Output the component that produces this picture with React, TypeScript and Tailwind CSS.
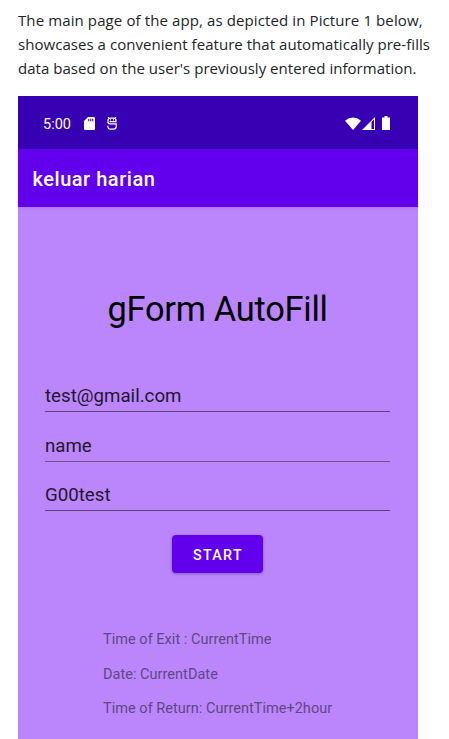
import React from "react";

const introLines = [
  { text: "The main page of the app, as depicted in Picture 1 below,", spacing: "tracking-[0.11px]" },
  { text: "showcases a convenient feature that automatically pre-fills", spacing: "tracking-[0.045px]" },
  { text: "data based on the user's previously entered information.", spacing: "tracking-[0.03px]" },
];

function StatusBar() {
  return (
    <div className="flex h-[53px] items-center bg-[#3700b3] pt-[2px] pr-[28px] pl-[25px] text-white">
      <span className="mt-[2px] w-[41px] text-[14.5px] leading-5">5:00</span>
      <svg className="mb-px h-[13px] w-[11px]" viewBox="0 0 11 13" fill="currentColor">
        <path fillRule="evenodd" d="M4 0H9.7Q11 0 11 1.3V11.7Q11 13 9.7 13H1.3Q0 13 0 11.7V4ZM4.2 1.7V4.2H5.3V1.7ZM6.2 1.7V4.2H7.3V1.7ZM8.2 1.7V4.2H9.3V1.7Z" />
      </svg>
      <svg className="mb-px ml-[12px] h-[13px] w-[10px]" viewBox="0 0 10 13" fill="none" stroke="currentColor" strokeWidth="1.2">
        <path d="M1.2 0L2 1.5M8.8 0L8 1.5M1 5.4V3.8Q1 1.1 3.5 1.1H6.5Q9 1.1 9 3.8V4.6H2.5" />
        <path d="M1 5Q1 6.9 3.2 6.9H9.2V9.5Q9.2 12.2 6.3 12.2H3.7Q.8 12.2 .8 8.8" />
        <path d="M3 2.9H4M6 2.9H7" />
      </svg>
      <div className="mb-px ml-auto flex items-center">
        <svg className="h-[13px] w-[16px]" viewBox="0 0 16 13" fill="currentColor">
          <path d="M0 3.8Q3.5 .6 8 .6T16 3.8L8 13Z" />
        </svg>
        <svg className="ml-[1px] h-[13px] w-[13px]" viewBox="0 0 13 13" fill="currentColor">
          <path fillRule="evenodd" d="M0 13L13 0V13ZM9.5 5V12H12V2.5Z" />
        </svg>
        <svg className="ml-[7px] h-[14px] w-[8px]" viewBox="0 0 8 14" fill="currentColor">
          <path d="M2.5 0H5.5V1.4H8V14H0V1.4H2.5Z" />
        </svg>
      </div>
    </div>
  );
}

function Field({ value, className }: { value: string; className: string }) {
  return (
    <div className={`border-b text-[18.7px] leading-6 text-[#22162f] ${className}`}>
      {value}
    </div>
  );
}

export default function App() {
  return (
    <main className="h-[739px] w-[449px] overflow-hidden bg-white pt-[8px] pl-[18px]">
      <div className="h-[88px] font-['Open_Sans',sans-serif] text-[15px] leading-6 whitespace-nowrap text-[#212529]">
        {introLines.map((line) => (
          <p key={line.text} className={line.spacing}>{line.text}</p>
        ))}
      </div>
      <section className="flex h-[643px] w-[400px] flex-col bg-[#bb86fc] font-[Roboto,sans-serif]">
        <StatusBar />
        <header className="flex h-[58px] shrink-0 items-center bg-[#6200ee] pt-px pl-[14.5px] text-[20px] font-medium tracking-[0.53px] text-white shadow-[0_1px_3px_rgba(0,0,0,0.1)]">
          keluar harian
        </header>
        <h1 className="mt-[81px] h-[42px] pl-[89.5px] text-[34.4px] leading-[42px] tracking-[-0.26px] whitespace-nowrap text-black">gForm AutoFill</h1>
        <div className="mr-[28px] ml-[27px] mt-[54px] flex flex-col">
          <Field value="test@gmail.com" className="h-[28px] border-[#5c4280]" />
          <Field value="name" className="mt-[22px] h-[28px] border-[#704f98]" />
          <Field value="G00test" className="mt-[21px] h-[28px] border-[#5c4280]" />
        </div>
        <button className="mt-[24px] ml-[154px] h-[38px] w-[91px] shrink-0 rounded-[4px] bg-[#6200ee] pt-[3px] pl-px text-[14.3px] font-medium tracking-[1.3px] text-white shadow-[0_1px_3px_rgba(0,0,0,0.3)]">
          START
        </button>
        <div className="mt-[50px] flex flex-col pl-[85px] text-[14.5px] leading-[34.5px] tracking-[0.03px] whitespace-nowrap text-[#604785]">
          <p>Time of Exit : CurrentTime</p>
          <p>Date: CurrentDate</p>
          <p>Time of Return: CurrentTime+2hour</p>
        </div>
      </section>
    </main>
  );
}
